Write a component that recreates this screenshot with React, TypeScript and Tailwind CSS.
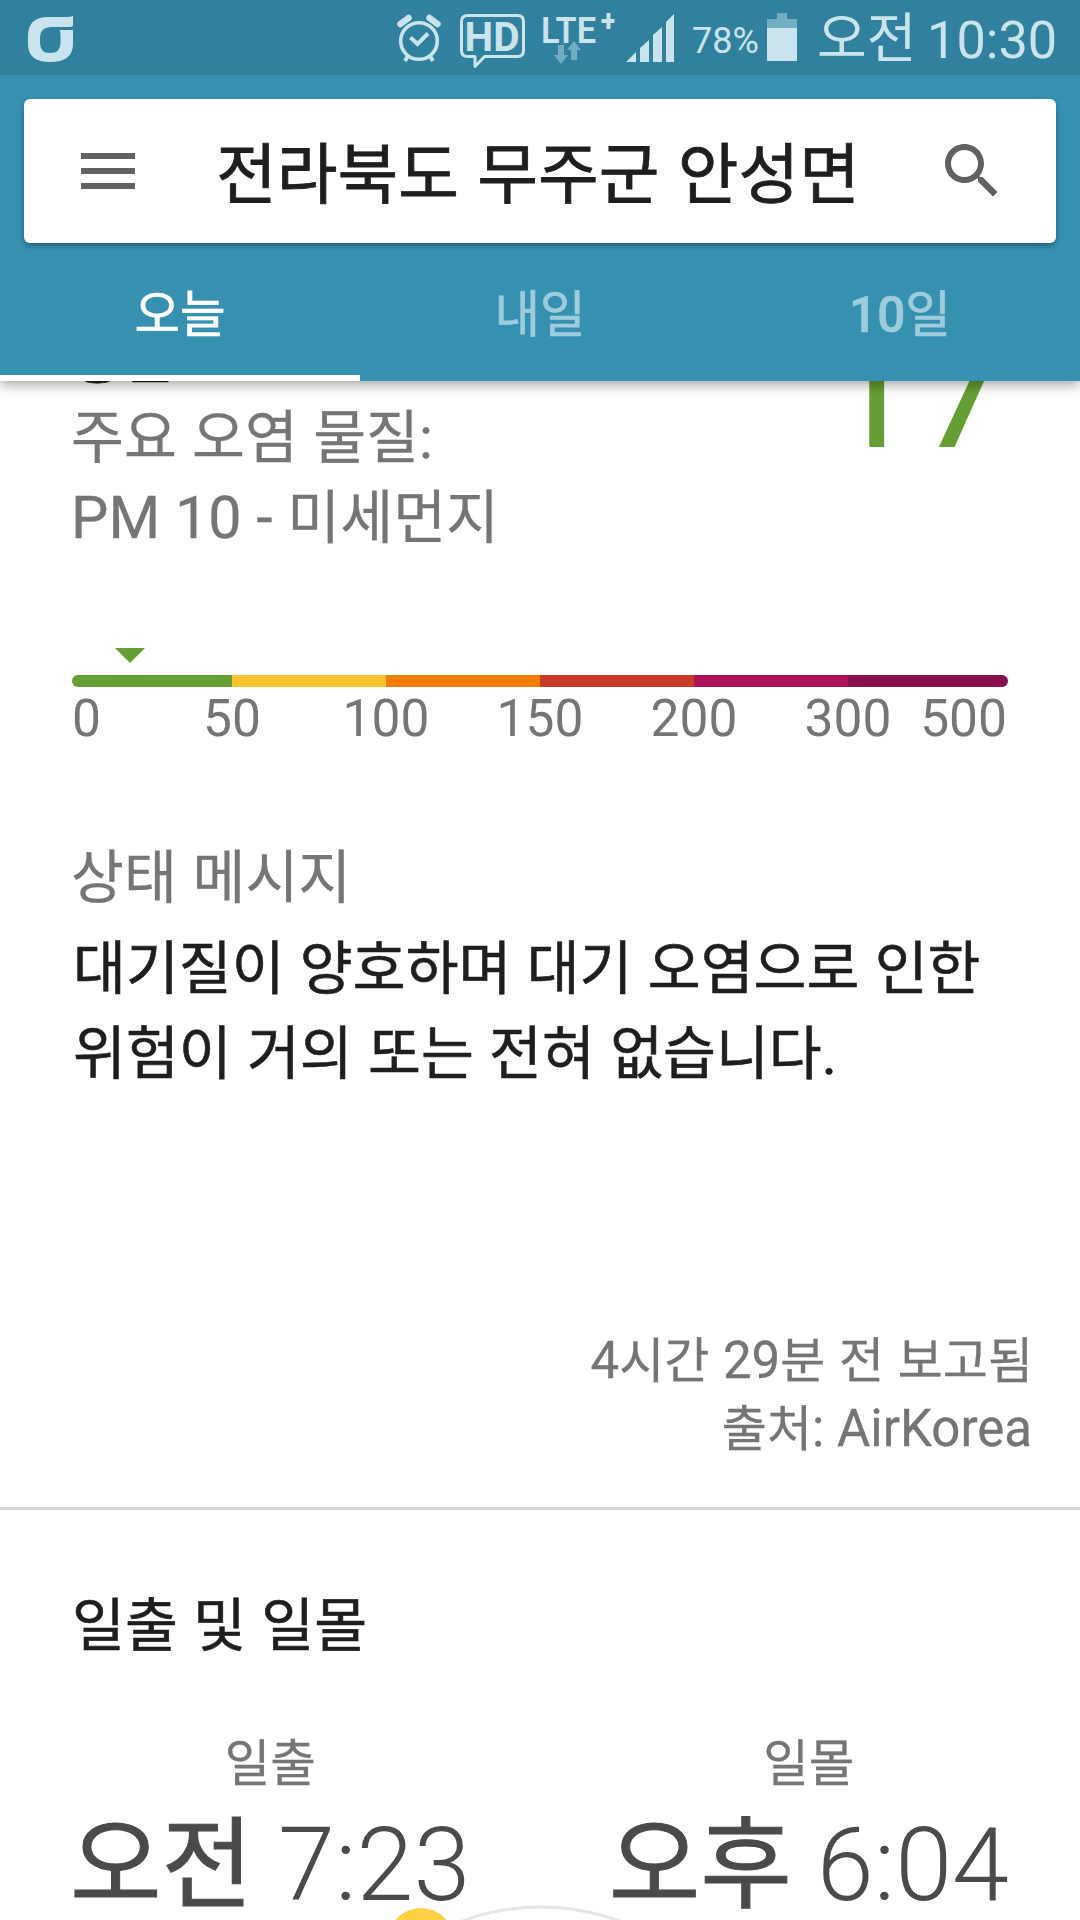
import type { ReactNode } from "react";

const SCALE = [
      { color: "bg-[#659f33]", width: "w-[160px]" },
      { color: "bg-[#fac12c]", width: "w-[154px]" },
      { color: "bg-[#f57c02]", width: "w-[154px]" },
      { color: "bg-[#c73b26]", width: "w-[154px]" },
      { color: "bg-[#ad1456]", width: "w-[154px]" },
      { color: "bg-[#870f4e]", width: "w-[160px]" },
];

const StatusBar = () => {
      return (
            <section className="flex h-[75px] items-center bg-[#31809e]">
                  <svg width="1080" height="75" viewBox="0 0 1080 75" fill="none">
                        {/* carrier */}
                        <path
                              fillRule="evenodd"
                              fill="#c9e4ec"
                              d="M73 16V26Q72 27 69 27H52Q40 27 40 38V43Q40 53 50 53Q60.5 53 60.5 43V35Q60.5 32 59.5 30H73V44Q73 62 50 62Q28 62 28 44V36Q28 17 48 17H66Q71 17 73 16Z"
                        />
                        {/* alarm */}
                        <g stroke="#c9e4ec">
                              <circle cx="419" cy="41" r="18.3" strokeWidth="3.6" />
                              <path d="M410.5 37.5L417.5 44L428 33.5" strokeWidth="4" />
                              <path d="M400.5 24L408.5 18" strokeWidth="6.5" strokeLinecap="round" />
                              <path d="M437.5 24L429.5 18" strokeWidth="6.5" strokeLinecap="round" />
                              <path d="M408 56L405 61M430 56L433 61" strokeWidth="4" />
                        </g>
                        {/* voice call bubble */}
                        <path
                              stroke="#c9e4ec"
                              strokeWidth="3"
                              strokeLinejoin="round"
                              d="M467.5 15.5H517.5Q523.5 15.5 523.5 21.5V50.5Q523.5 56.5 517.5 56.5H484.5L475 66.5V56.5H467.5Q461.5 56.5 461.5 50.5V21.5Q461.5 15.5 467.5 15.5Z"
                        />
                        <text x="464.5" y="51" fontSize="41" fontWeight="700" textLength="55" lengthAdjust="spacingAndGlyphs" fill="#c9e4ec">HD</text>
                        {/* network */}
                        <text x="541" y="43" fontSize="36" fontWeight="600" textLength="55" lengthAdjust="spacingAndGlyphs" fill="#c9e4ec">LTE</text>
                        <path stroke="#c9e4ec" strokeWidth="4" d="M601.5 21H614.5M608.5 13V29" />
                        <path fill="#72adc2" d="M558 45H564V55H568L561 64L554 55H558ZM571 60V50H567L574 41L581 50H577V60Z" />
                        <path fill="#c9e4ec" d="M626 62L636 52V62ZM640 62V48L649 40V62ZM653 62V35L662 27V62ZM666 62V22L674 14V62Z" />
                        <text x="692" y="53" fontSize="36" fill="#c9e4ec">78%</text>
                        {/* battery */}
                        <path fill="#72adc2" d="M777 13H787V19H797V28H767V19H777Z" />
                        <path fill="#c9e4ec" d="M767 28H797V61H767Z" />
                        <text x="817" y="58" fontSize="54" fill="#c9e4ec">오전</text>
                        <text x="927" y="58" fontSize="52.3" fill="#c9e4ec">10:30</text>
                  </svg>
            </section>
      );
};

const SearchCard = () => {
      return (
            <section className="mx-6 mt-6 flex h-36 items-center rounded-md bg-white px-12 shadow-[0_3px_5px_rgba(0,0,0,0.3)]">
                  <svg width="72" height="72" viewBox="0 0 24 24" fill="#616161">
                        <path d="M3 18h18v-2H3v2zm0-5h18v-2H3v2zm0-7v2h18V6H3z" />
                  </svg>
                  <h1 className="ml-[72px] mt-2.5 grow whitespace-nowrap text-[66px] leading-[80px] text-[#1e1e1e] [-webkit-text-stroke:0.8px] [word-spacing:2px]">
                        전라북도 무주군 안성면
                  </h1>
                  <svg width="72" height="72" viewBox="0 0 24 24" fill="#616161">
                        <path d="M15.5 14h-.79l-.28-.27C15.41 12.59 16 11.11 16 9.5 16 5.91 13.09 3 9.5 3S3 5.91 3 9.5 5.91 16 9.5 16c1.61 0 3.09-.59 4.23-1.57l.27.28v.79l5 4.99L20.49 19l-4.99-5zm-6 0C7.01 14 5 11.99 5 9.5S7.01 5 9.5 5 14 7.01 14 9.5 11.99 14 9.5 14z" />
                  </svg>
            </section>
      );
};

const Tabs = () => {
      return (
            <nav className="grid h-[138px] grid-cols-3 text-center text-[49.5px] leading-[118px] text-[#9dcddc] [-webkit-text-stroke:0.7px]">
                  <div className="border-b-[6px] border-white pt-[13px] text-white">오늘</div>
                  <div className="pt-[13px]">내일</div>
                  <div className="pt-[13px]">
                        <span className="font-medium">10</span>일
                  </div>
            </nav>
      );
};

const AirScale = () => {
      return (
            <section className="mt-[90px]">
                  <svg className="ml-[43px]" width="30" height="15" viewBox="0 0 30 15">
                        <path d="M0 0h30L15 15z" fill="#659f33" />
                  </svg>
                  <div className="mt-3 flex h-3 overflow-hidden rounded-full">
                        {SCALE.map((part) => (
                              <div key={part.color} className={`${part.color} ${part.width}`} />
                        ))}
                  </div>
                  <div className="mt-0.5 flex text-center text-[51.5px] leading-[60px] text-[#757575]">
                        <span className="w-[83px] text-left">0</span>
                        <span className="w-[154px]">50</span>
                        <span className="w-[154px]">100</span>
                        <span className="w-[154px]">150</span>
                        <span className="w-[154px]">200</span>
                        <span className="w-[154px]">300</span>
                        <span className="flex w-[82px] justify-end">500</span>
                  </div>
            </section>
      );
};

const SunTime = ({ label, period, children }: { label: string; period: string; children: ReactNode }) => {
      return (
            <div className="flex flex-col items-center">
                  <p className="text-[49.5px] leading-[60px] text-[#757575] [-webkit-text-stroke:0.3px]">{label}</p>
                  <p className="mt-[11px] whitespace-nowrap text-[102.6px] font-light leading-[120px] text-[#4a4a4a]">
                        <span className="text-[99.5px] font-normal leading-none [-webkit-text-stroke:1px]">{period}</span> {children}
                  </p>
            </div>
      );
};

const App = () => {
      return (
            <main className="h-[1920px] w-[1080px] overflow-hidden bg-white font-['Roboto','Noto_Sans_CJK_KR',sans-serif]">
                  <header className="relative z-10 h-[381px] bg-[#3690af] shadow-[0_4px_12px_rgba(0,0,0,0.35)]">
                        <StatusBar />
                        <SearchCard />
                        <Tabs />
                  </header>

                  <section className="-mt-[62px] h-[1188px] px-[72px]">
                        <div className="flex h-[239px] justify-between">
                              <div className="-ml-px text-[57.5px] leading-[80px] text-[#757575] [-webkit-text-stroke:0.3px]">
                                    <h2 className="text-[#1e1e1e] [-webkit-text-stroke:0.6px]">좋음</h2>
                                    <p className="[word-spacing:1px]">주요 오염 물질:</p>
                                    <p>
                                          <span className="text-[59.3px] leading-none">PM 10 - </span>미세먼지
                                    </p>
                              </div>
                              <p className="-mr-0.5 -mt-7 text-[164px] leading-[200px] text-[#659f33]">17</p>
                        </div>
                        <AirScale />
                        <h3 className="-ml-px mt-[90px] text-[57.5px] leading-[80px] text-[#757575] [-webkit-text-stroke:0.3px] [word-spacing:1.5px]">
                              상태 메시지
                        </h3>
                        <p className="ml-px mt-2 whitespace-nowrap text-[57.5px] leading-[85px] text-[#1e1e1e] [-webkit-text-stroke:0.6px] [word-spacing:1px]">
                              대기질이 양호하며 대기 오염으로 인한
                              <br />
                              위험이 거의 또는 전혀 없습니다.
                        </p>
                        <div className="-mr-6 mt-[230.5px] text-right text-[49px] leading-[68px] text-[#757575] [-webkit-text-stroke:0.3px]">
                              <p className="-mr-px [word-spacing:1.5px]">
                                    <span className="text-[51px] leading-none">4</span>시간 <span className="text-[51px] leading-none">29</span>분 전 보고됨
                              </p>
                              <p>
                                    출처<span className="text-[51px] leading-none">: AirKorea</span>
                              </p>
                        </div>
                  </section>

                  <section className="border-t-[3px] border-[#d4d4d4] px-[72px] pt-[77px]">
                        <h2 className="text-[57.5px] leading-[80px] text-[#1e1e1e] [-webkit-text-stroke:0.6px] [word-spacing:1px]">일출 및 일몰</h2>
                        <div className="-ml-0.5 -mr-px mt-[67px] flex justify-between">
                              <SunTime label="일출" period="오전">7:23</SunTime>
                              <SunTime label="일몰" period="오후">6:04</SunTime>
                        </div>
                        <svg className="-mt-[25px] ml-[226px]" width="484" height="60" viewBox="298 1900 484 60">
                              <circle cx="541" cy="2135" r="228" fill="none" stroke="#e6e6e6" strokeWidth="3" />
                              <circle cx="421" cy="1941" r="33" fill="#ffd042" />
                        </svg>
                  </section>
            </main>
      );
};

export default App;
